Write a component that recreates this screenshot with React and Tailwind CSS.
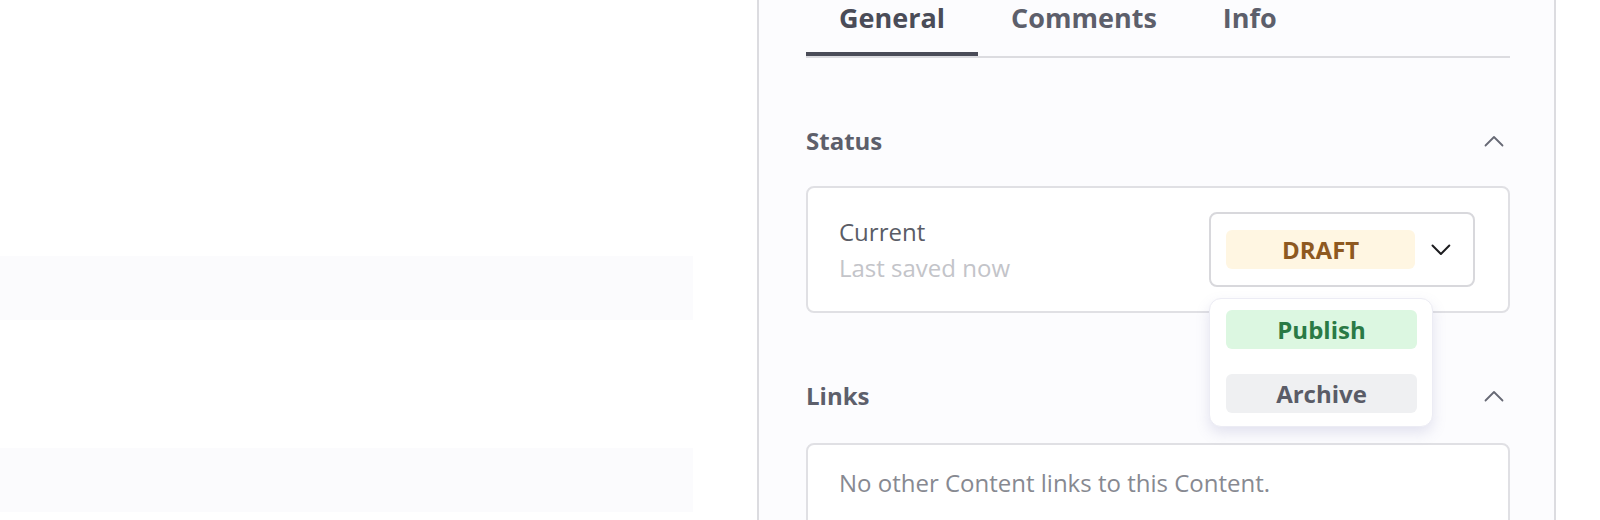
import { useState } from 'react';

const tabs = ['General', 'Comments', 'Info'];

function ChevronUp() {
  return (
    <svg width="20" height="12" viewBox="0 0 20 12" fill="none">
      <polyline points="1.5,10.5 10,2 18.5,10.5" stroke="#676975" strokeWidth="1.8" strokeLinecap="round" strokeLinejoin="round" />
    </svg>
  );
}

function ChevronDown() {
  return (
    <svg width="20" height="12" viewBox="0 0 20 12" fill="none">
      <polyline points="1.5,1.5 10,10 18.5,1.5" stroke="#1c1c1f" strokeWidth="2" strokeLinecap="round" strokeLinejoin="round" />
    </svg>
  );
}

function SectionHeader({ title, className }) {
  return (
    <div className={`flex items-center justify-between ${className}`}>
      <span className="text-[24px] leading-[32px] font-bold text-[#5d5f6b]">{title}</span>
      <span className="mr-[6px]">
        <ChevronUp />
      </span>
    </div>
  );
}

export default function App() {
  const [active, setActive] = useState('General');

  return (
    <div className="flex w-[1600px] h-[520px] overflow-hidden bg-white font-['Open_Sans',sans-serif]">
      {/* Main area (placeholder rows) */}
      <div className="w-[757px] shrink-0 pr-[64px]">
        <div className="mt-[256px] h-[64px] bg-[#fbfbfd]" />
        <div className="mt-[128px] h-[64px] bg-[#fbfbfd]" />
      </div>

      {/* Side panel */}
      <div className="w-[799px] shrink-0 h-full border-x-2 border-[#dcdce0] bg-[#fcfcfe] pl-[47px] pr-[44px]">
        <div className="flex border-b-2 border-[#dcdce0]">
          {tabs.map((tab) => (
            <button
              key={tab}
              onClick={() => setActive(tab)}
              className={`px-[33px] pb-[16px] text-[27px] leading-[36px] font-bold border-b-4 ${
                active === tab
                  ? 'border-[#4a4c58] text-[#4a4c58]'
                  : 'border-transparent text-[#5d5f6b]'
              }`}
            >
              {tab}
            </button>
          ))}
        </div>

        <SectionHeader title="Status" className="mt-[67px]" />

        <div className="mt-[29px] rounded-[8px] border-2 border-[#e0e0e4] bg-white pl-[31px] pr-[33px] py-[24px] flex items-center justify-between">
          <div className="text-[24px] leading-[36px]">
            <div className="text-[#5a5c66]">Current</div>
            <div className="text-[#c3c4c9]">Last saved now</div>
          </div>

          <div className="relative">
            <div className="w-[266px] h-[75px] rounded-[8px] border-2 border-[#d8d8dc] bg-white flex items-center pl-[15px] pr-[22px] gap-[16px]">
              <div className="w-[191px] h-[39px] rounded-[6px] bg-[#fff6e2] flex items-center justify-center text-[24px] font-bold text-[#8e5920]">
                DRAFT
              </div>
              <ChevronDown />
            </div>

            <div className="absolute left-0 top-[86px] z-10 w-[224px] rounded-[12px] border border-[#ececf4] bg-white pl-[16px] pr-[15px] pt-[11px] pb-[13px] shadow-[0_6px_14px_rgba(110,110,170,0.18)] flex flex-col gap-[25px]">
              <div className="h-[39px] rounded-[6px] bg-[#dcf7e1] flex items-center justify-center text-[24px] font-bold text-[#2a7a45]">
                Publish
              </div>
              <div className="h-[39px] rounded-[6px] bg-[#eff0f2] flex items-center justify-center text-[24px] font-bold text-[#5a5c67]">
                Archive
              </div>
            </div>
          </div>
        </div>

        <SectionHeader title="Links" className="mt-[67px]" />

        <div className="mt-[31px] h-[120px] rounded-[8px] border-2 border-[#e0e0e4] bg-white px-[31px] pt-[20px]">
          <p className="text-[24px] leading-[36px] text-[#878991]">No other Content links to this Content.</p>
        </div>
      </div>

      <div className="flex-1 bg-white" />
    </div>
  );
}
